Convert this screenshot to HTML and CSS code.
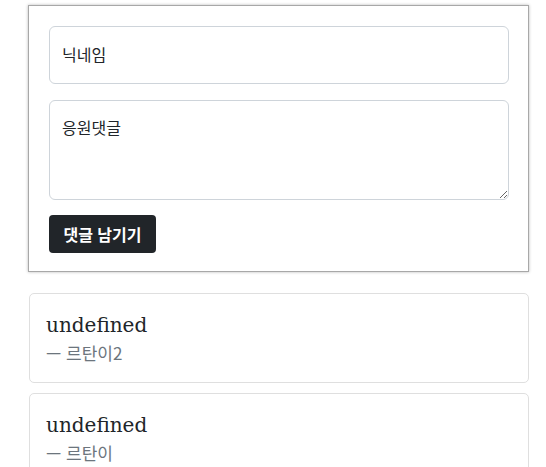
FILE: index.html
```html
<!DOCTYPE html>
<html lang="ko">
<head>
<meta charset="utf-8">
<link rel="stylesheet" href="styles.css">
</head>
<body>
<div class="page">
  <form class="post-card">
    <input class="field" type="text" placeholder="닉네임">
    <textarea class="field area" placeholder="응원댓글"></textarea>
    <button class="btn" type="button">댓글 남기기</button>
  </form>
  <div class="comment">
    <p class="comment-text">undefined</p>
    <p class="comment-author">— 르탄이2</p>
  </div>
  <div class="comment">
    <p class="comment-text">undefined</p>
    <p class="comment-author">— 르탄이</p>
  </div>
</div>
</body>
</html>
```
FILE: styles.css
```css
html, body {
  margin: 0;
  padding: 0;
  background: #fff;
}
body {
  font-family: "Noto Sans CJK KR", "Noto Sans", sans-serif;
  color: #212529;
}
.page {
  width: 500px;
  margin-left: 29px;
  padding-top: 5px;
  display: flex;
  flex-direction: column;
  gap: 10px;
}
.post-card {
  border: 1px solid #a8a8a8;
  box-shadow: 0 0 3px #bbb;
  padding: 20px 20px 18px;
  margin: 0 0 11px -1px;
  display: flex;
  flex-direction: column;
  align-items: flex-start;
  gap: 16px;
  box-sizing: border-box;
  width: 501px;
}
.field {
  box-sizing: border-box;
  width: 460px;
  height: 58px;
  border: 1px solid #ced4da;
  border-radius: 6px;
  padding: 0 12px 2px;
  font-family: inherit;
  font-size: 16px;
  color: #212529;
  margin: 0;
}
.field::placeholder {
  color: #212529;
  opacity: 1;
}
.area {
  height: 100px;
  padding-top: 15px;
  resize: vertical;
  line-height: 1.4;
}
.btn {
  background: #212529;
  color: #fff;
  border: none;
  border-radius: 4px;
  height: 38px;
  width: 107px;
  margin-top: -1px;
  font-family: inherit;
  font-size: 16px;
  font-weight: 700;
  padding: 0;
}
.comment {
  box-sizing: border-box;
  border: 1px solid #dfdfdf;
  border-radius: 5px;
  height: 90px;
  padding: 17px 16px 0;
}
.comment-text {
  margin: 0;
  font-family: "DejaVu Serif", serif;
  font-size: 20px;
  line-height: 28px;
  color: #212529;
}
.comment-author {
  margin: 2px 0 0;
  font-size: 17px;
  line-height: 24px;
  color: #6c757d;
}
```
